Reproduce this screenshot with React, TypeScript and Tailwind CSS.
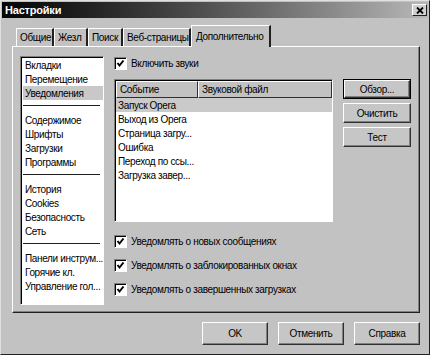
import React from "react"

const font = { fontFamily: '"Liberation Sans", Arial, sans-serif' }

function Check({ label }: { label: string }) {
  return (
    <div className="flex items-center h-[13px]">
      <div className="w-[13px] h-[13px] bg-white border border-t-[#808080] border-l-[#808080] border-r-white border-b-white shadow-[inset_1px_1px_0_#000] flex items-center justify-center">
        <svg width="9" height="9" viewBox="0 0 9 9">
          <polyline points="1.5,4 3.5,6.5 7.5,1.5" fill="none" stroke="#000" strokeWidth="2" />
        </svg>
      </div>
      <span className="ml-[4px] text-[10px] tracking-[-0.35px] leading-none text-black whitespace-nowrap">{label}</span>
    </div>
  )
}

function Btn({ label, def, className }: { label: string; def?: boolean; className?: string }) {
  return (
    <div className={`${className ?? ""} ${def ? "border border-black" : ""} flex`}>
      <div className="flex-1 flex items-center justify-center bg-[#c6c6c6] border border-t-white border-l-white border-r-[#303030] border-b-[#303030] shadow-[inset_-1px_-1px_0_#808080] text-[10px] tracking-[-0.35px] text-black">
        {label}
      </div>
    </div>
  )
}

const groups = [
  ["Вкладки", "Перемещение", "Уведомления"],
  ["Содержимое", "Шрифты", "Загрузки", "Программы"],
  ["История", "Cookies", "Безопасность", "Сеть"],
  ["Панели инструм...", "Горячие кл.", "Управление гол..."],
]

const events = ["Запуск Opera", "Выход из Opera", "Страница загру...", "Ошибка", "Переход по ссы...", "Загрузка завер..."]

const tabs = ["Общие", "Жезл", "Поиск", "Веб-страницы"]
const tabW = ["w-[38px]", "w-[34px]", "w-[35px]", "w-[68px]"]

export default function App() {
  return (
    <div style={font} className="w-[430px] h-[355px] bg-[#c2c2c2] border border-t-[#e0e0e0] border-l-[#e0e0e0] border-r-[#202020] border-b-[#202020] p-px flex flex-col">
      {/* title bar */}
      <div className="h-[16px] bg-gradient-to-r from-[#050505] via-[#555] to-[#b8b8b8] flex items-center justify-between pl-[3px] pr-[1px]">
        <span className="text-white font-bold text-[11px] leading-none tracking-[-0.2px]">Настройки</span>
        <div className="w-[15px] h-[12px] bg-[#d0d0d0] border border-t-white border-l-white border-r-[#202020] border-b-[#202020] flex items-center justify-center">
          <svg width="8" height="7" viewBox="0 0 8 7">
            <path d="M1 0.5 L7 6.5 M7 0.5 L1 6.5" stroke="#000" strokeWidth="1.8" />
          </svg>
        </div>
      </div>

      {/* tabs */}
      <div className="mt-[7px] ml-[12px] flex items-end h-[21px] relative z-10 text-[10px] tracking-[-0.35px] text-black whitespace-nowrap">
        <div className="w-[2px]" />
        {tabs.map((t, i) => (
          <div
            key={t}
            className={`${tabW[i]} h-[18px] bg-[#c2c2c2] border-t border-l border-t-white border-l-white border-r-2 border-r-[#202020] flex items-center pl-[3px]`}
          >
            {t}
          </div>
        ))}
        <div className="w-[80px] h-[22px] -mb-px bg-[#c2c2c2] border-t border-l border-t-white border-l-white border-r-2 border-r-[#202020] flex items-center pl-[4px]">
          Дополнительно
        </div>
      </div>

      {/* panel */}
      <div className="ml-[10px] w-[408px] h-[267px] border border-t-white border-l-white border-r-[#202020] border-b-[#202020] shadow-[inset_-1px_-1px_0_#808080] flex pl-[7px] pt-[9px]">
        {/* left list */}
        <div className="w-[84px] h-[249px] bg-white border border-t-[#808080] border-l-[#808080] border-r-white border-b-white shadow-[inset_1px_1px_0_#000] pl-[2px] pt-[1px] text-[10px] tracking-[-0.35px] text-black">
          {groups.map((g, gi) => (
            <div key={gi}>
              {gi > 0 && <div className="mt-[5px] mb-[7px] mr-[3px] h-px bg-[#202020]" />}
              {g.map((it) => (
                <div
                  key={it}
                  className={`h-[14px] flex items-center pl-[2px] whitespace-nowrap ${it === "Уведомления" ? "bg-[#c8c8c8]" : ""}`}
                >
                  {it}
                </div>
              ))}
            </div>
          ))}
        </div>

        {/* middle */}
        <div className="ml-[10px] w-[219px] flex flex-col">
          <div className="mt-[1px]">
            <Check label="Включить звуки" />
          </div>
          <div className="mt-[9px] h-[143px] bg-white border border-t-[#808080] border-l-[#808080] border-r-white border-b-white shadow-[inset_1px_1px_0_#000] pl-px pt-px text-[10px] tracking-[-0.35px] text-black">
            <div className="flex h-[17px]">
              <div className="w-[82px] bg-[#c2c2c2] border border-t-white border-l-white border-r-[#303030] border-b-[#303030] flex items-center pl-[3px]">
                Событие
              </div>
              <div className="flex-1 bg-[#c2c2c2] border border-t-white border-l-white border-r-[#303030] border-b-[#303030] flex items-center pl-[3px]">
                Звуковой файл
              </div>
            </div>
            {events.map((e, i) => (
              <div key={e} className={`h-[14px] flex items-center pl-[2px] ${i === 0 ? "bg-[#cacaca]" : ""}`}>
                {e}
              </div>
            ))}
          </div>
          <div className="mt-[13px] flex flex-col gap-[11px]">
            <Check label="Уведомлять о новых сообщениях" />
            <Check label="Уведомлять о заблокированных окнах" />
            <Check label="Уведомлять о завершенных загрузках" />
          </div>
        </div>

        {/* right buttons */}
        <div className="ml-[10px] w-[68px] flex flex-col pt-[23px] gap-[4px]">
          <Btn label="Обзор..." def className="h-[20px]" />
          <Btn label="Очистить" className="h-[20px]" />
          <Btn label="Тест" className="h-[20px]" />
        </div>
      </div>

      {/* bottom buttons */}
      <div className="mt-[9px] ml-[200px] flex gap-[10px]">
        <Btn label="OK" className="w-[66px] h-[23px]" />
        <Btn label="Отменить" className="w-[66px] h-[23px]" />
        <Btn label="Справка" className="w-[66px] h-[23px]" />
      </div>
    </div>
  )
}
